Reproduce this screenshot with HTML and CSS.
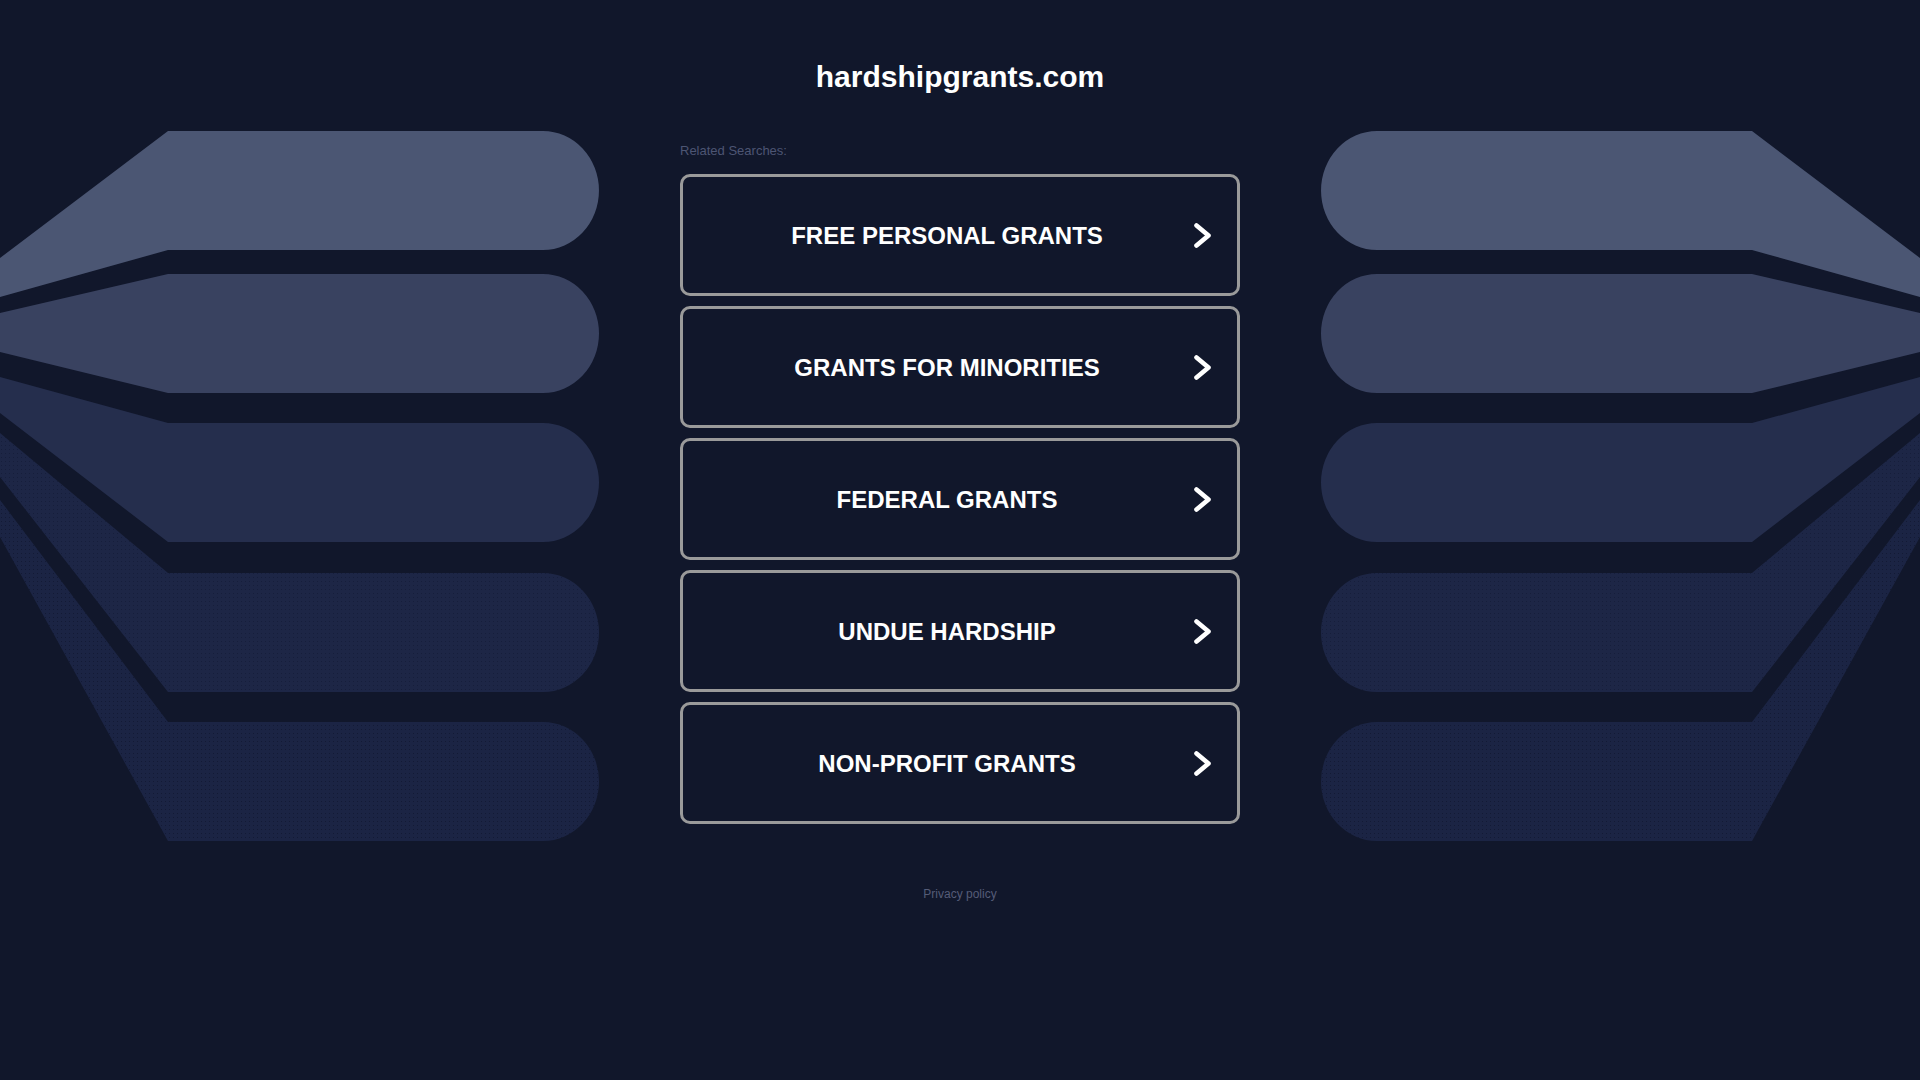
FILE: index.html
```html
<!DOCTYPE html>
<html lang="en">
<head>
<meta charset="utf-8">
<title>hardshipgrants.com</title>
<link rel="stylesheet" href="styles.css">
</head>
<body>
<svg class="backdrop" width="1920" height="1080" viewBox="0 0 1920 1080" aria-hidden="true">
  <defs>
    <pattern id="dots4" width="4" height="4" patternUnits="userSpaceOnUse">
      <rect width="4" height="4" fill="#1d2646"/>
      <rect x="1" y="1" width="1" height="1" fill="#161e3b"/>
    </pattern>
    <pattern id="dots5" width="4" height="4" patternUnits="userSpaceOnUse">
      <rect width="4" height="4" fill="#1b2444"/>
      <rect x="1" y="1" width="1" height="1" fill="#131a35"/>
    </pattern>
    <g id="fan">
      <path fill="#4b5673" d="M0 258 L168 131 L543 131 A56 59.5 0 0 1 543 250 L168 250 L0 297 Z"/>
      <path fill="#394260" d="M0 313 L168 274 L543 274 A56 59.5 0 0 1 543 393 L168 393 L0 352 Z"/>
      <path fill="#252e4d" d="M0 377 L168 423 L543 423 A56 59.5 0 0 1 543 542 L168 542 L0 413 Z"/>
      <path fill="url(#dots4)" d="M0 433 L168 573 L543 573 A56 59.5 0 0 1 543 692 L168 692 L0 477 Z"/>
      <path fill="url(#dots5)" d="M0 500 L168 722 L543 722 A56 59.5 0 0 1 543 841 L168 841 L0 537 Z"/>
    </g>
  </defs>
  <use href="#fan"/>
  <use href="#fan" transform="matrix(-1 0 0 1 1920 0)"/>
</svg>

<main class="page">
  <h1 class="domain">hardshipgrants.com</h1>
  <section class="related">
    <p class="related-title">Related Searches:</p>
    <ul class="links">
      <li><a class="link" href="#"><span class="link-text">FREE PERSONAL GRANTS</span><svg class="chev" viewBox="0 0 17 25"><path d="M2.5 2.5 L14.5 12.5 L2.5 22.5"/></svg></a></li>
      <li><a class="link" href="#"><span class="link-text">GRANTS FOR MINORITIES</span><svg class="chev" viewBox="0 0 17 25"><path d="M2.5 2.5 L14.5 12.5 L2.5 22.5"/></svg></a></li>
      <li><a class="link" href="#"><span class="link-text">FEDERAL GRANTS</span><svg class="chev" viewBox="0 0 17 25"><path d="M2.5 2.5 L14.5 12.5 L2.5 22.5"/></svg></a></li>
      <li><a class="link" href="#"><span class="link-text">UNDUE HARDSHIP</span><svg class="chev" viewBox="0 0 17 25"><path d="M2.5 2.5 L14.5 12.5 L2.5 22.5"/></svg></a></li>
      <li><a class="link" href="#"><span class="link-text">NON-PROFIT GRANTS</span><svg class="chev" viewBox="0 0 17 25"><path d="M2.5 2.5 L14.5 12.5 L2.5 22.5"/></svg></a></li>
    </ul>
  </section>
  <footer class="footer">
    <a class="privacy" href="#">Privacy policy</a>
  </footer>
</main>
</body>
</html>
```

FILE: styles.css
```css
html, body {
  margin: 0;
  padding: 0;
}

body {
  background: #11172b;
  font-family: "Liberation Sans", Arial, sans-serif;
  overflow: hidden;
  min-height: 1080px;
}

.backdrop {
  position: absolute;
  top: 0;
  left: 0;
  width: 1920px;
  height: 1080px;
  z-index: 0;
}

.page {
  position: relative;
  z-index: 1;
  width: 560px;
  margin: 0 auto;
  padding-top: 59px;
}

.domain {
  margin: 0;
  font-size: 30px;
  line-height: 36px;
  font-weight: bold;
  color: #ffffff;
  text-align: center;
}

.related-title {
  margin: 48px 0 0;
  font-size: 13px;
  line-height: 16px;
  color: #4d5573;
}

.links {
  list-style: none;
  margin: 15px 0 0;
  padding: 0;
  display: flex;
  flex-direction: column;
  gap: 10px;
}

.link {
  display: flex;
  align-items: center;
  height: 122px;
  box-sizing: border-box;
  border: 3px solid #9a9a9a;
  border-radius: 10px;
  padding-right: 26px;
  text-decoration: none;
  color: #ffffff;
}

.link-text {
  flex: 1;
  padding-top: 2px;
  text-align: center;
  font-size: 24px;
  font-weight: bold;
}

.chev {
  flex: none;
  width: 17px;
  height: 25px;
  margin-left: -17px;
}

.chev path {
  fill: none;
  stroke: #ffffff;
  stroke-width: 4.6;
  stroke-linecap: round;
  stroke-linejoin: round;
}

.footer {
  margin-top: 63px;
  text-align: center;
  font-size: 12px;
  line-height: 14px;
}

.privacy {
  color: #555c77;
  text-decoration: none;
}
```
